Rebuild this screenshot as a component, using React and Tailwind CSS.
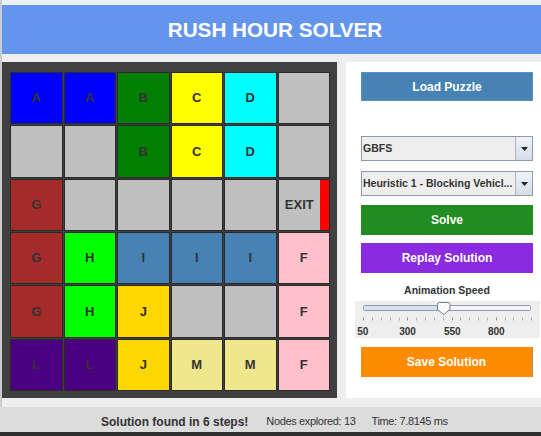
import React from "react";

const COLORS = {
  A: "bg-[#0000ff]",
  B: "bg-[#008000]",
  C: "bg-[#ffff00]",
  D: "bg-[#00ffff]",
  F: "bg-[#ffc0cb]",
  G: "bg-[#a52a2a]",
  H: "bg-[#00ff00]",
  I: "bg-[#4682b4]",
  J: "bg-[#ffd700]",
  L: "bg-[#4b0082]",
  M: "bg-[#f0e68c]",
  "": "bg-[#c0c0c0]",
};

const BOARD = [
  ["A", "A", "B", "C", "D", ""],
  ["", "", "B", "C", "D", ""],
  ["G", "", "", "", "", "EXIT"],
  ["G", "H", "I", "I", "I", "F"],
  ["G", "H", "J", "", "", "F"],
  ["L", "L", "J", "M", "M", "F"],
];

function Cell({ v }) {
  if (v === "EXIT") {
    return (
      <div className="flex border border-[#2a2a2a] bg-[#c0c0c0]">
        <div className="flex-1 flex items-center justify-center text-[13px] font-bold text-[#333]">EXIT</div>
        <div className="w-[9px] bg-[#ff0000]" />
      </div>
    );
  }
  return (
    <div className={`flex items-center justify-center border border-[#2a2a2a] text-[13px] font-bold text-[#333] ${COLORS[v]}`}>
      {v}
    </div>
  );
}

function Combo({ label }) {
  return (
    <div className="flex h-[25px] border border-[#8e9aa6] bg-[#eeeeee]">
      <div className="flex-1 min-w-0 flex items-center pl-[1px] text-[10.5px] font-bold text-[#333] whitespace-nowrap overflow-hidden">
        {label}
      </div>
      <div className="w-[17px] shrink-0 flex items-center justify-center border-l border-[#a9b5c1] bg-gradient-to-b from-[#eef3f8] to-[#d3dee9]">
        <svg width="7" height="4" viewBox="0 0 7 4">
          <path d="M0 0 H7 L3.5 4 Z" fill="#222" />
        </svg>
      </div>
    </div>
  );
}

function Btn({ children, cls }) {
  return (
    <div className={`h-[30px] flex items-center justify-center text-[12px] font-bold text-white ${cls}`}>
      {children}
    </div>
  );
}

function Slider() {
  const ticks = [];
  for (let i = 0; i < 20; i++) {
    const x = Math.round(8.3 + i * 8.83) + 0.5;
    ticks.push(<line key={i} x1={x} x2={x} y1={16.5} y2={19.5} stroke={i % 5 === 0 ? "#8a9096" : "#aab0b6"} strokeWidth="1" />);
  }
  const labels = [
    ["50", 7.8],
    ["300", 52.5],
    ["550", 97.3],
    ["800", 141.3],
  ];
  return (
    <div className="ml-[-6px] w-[185px] h-[37px] bg-[#eeeeee]">
      <svg width="185" height="37" viewBox="0 0 185 37">
        <rect x="8.5" y="4.5" width="167" height="5" rx="1" fill="#f5f7f9" stroke="#8d9bab" />
        <rect x="9" y="5" width="80" height="4" fill="#d6e2ef" />
        <path d="M82.5 3.5 Q82.5 1.5 84.5 1.5 H93 Q95 1.5 95 3.5 V8.5 L88.75 13.5 L82.5 8.5 Z" fill="#fafbfc" stroke="#6f7f8f" />
        {ticks}
        {labels.map(([t, x]) => (
          <text key={t} x={x} y="34.3" textAnchor="middle" fontSize="10" fontWeight="bold" fill="#333" fontFamily="'Liberation Sans', Arial, sans-serif">
            {t}
          </text>
        ))}
      </svg>
    </div>
  );
}

export default function App() {
  return (
    <div className="w-[541px] h-[436px] overflow-hidden bg-[#eeeeee] flex flex-col font-['Liberation_Sans',Arial,sans-serif]">
      <div className="flex h-[407px] shrink-0">
        <div className="w-[2px] shrink-0 bg-[#c9cccf]" />
        <div className="flex-1 min-w-0 flex flex-col">
          <div className="h-[5px] bg-[#e8f0f2]" />
          <div className="h-[49px] bg-[#6495ed] flex items-center justify-center pl-[7px] text-[20.7px] font-bold text-white">
            RUSH HOUR SOLVER
          </div>
          <div className="flex h-[336px] mt-[8px]">
            <div className="w-[335px] shrink-0 bg-[#404040] pl-[8px] pt-[10px]">
              <div className="w-[320px] h-[319px] grid grid-cols-6 grid-rows-6 gap-[1px]">
                {BOARD.flat().map((v, i) => (
                  <Cell key={i} v={v} />
                ))}
              </div>
            </div>
            <div className="flex-1 min-w-0 ml-[9px] bg-white pl-[15px] pr-[8px] pt-[10px] flex flex-col">
              <div className="h-[29px] flex items-center justify-center text-[12px] font-bold text-white bg-[#4682b4] border border-[#5b91be]">
                Load Puzzle
              </div>
              <div className="mt-[35px]">
                <Combo label="GBFS" />
              </div>
              <div className="mt-[10px]">
                <Combo label="Heuristic 1 - Blocking Vehicl..." />
              </div>
              <div className="mt-[9px]">
                <Btn cls="bg-[#228b22]">Solve</Btn>
              </div>
              <div className="mt-[8px]">
                <Btn cls="bg-[#8a2be2]">Replay Solution</Btn>
              </div>
              <div className="mt-[11px] h-[13px] leading-[13px] text-center text-[10.5px] font-bold text-[#333]">
                Animation Speed
              </div>
              <div className="mt-[4px]">
                <Slider />
              </div>
              <div className="mt-[9px]">
                <Btn cls="bg-[#ff8c00] border-r border-[#c08a50]">Save Solution</Btn>
              </div>
            </div>
          </div>
        </div>
      </div>
      <div className="h-[25px] shrink-0 bg-[#dcdcdc] flex items-center pl-[101px] pt-[4px] text-[#333] whitespace-nowrap">
        <span className="text-[12px] font-bold">Solution found in 6 steps!</span>
        <span className="ml-[18px] text-[11px] tracking-[-0.35px]">Nodes explored: 13</span>
        <span className="ml-[16px] text-[11px] tracking-[-0.35px]">Time: 7.8145 ms</span>
      </div>
      <div className="h-[4px] shrink-0 bg-[#2f2f2f]" />
    </div>
  );
}
